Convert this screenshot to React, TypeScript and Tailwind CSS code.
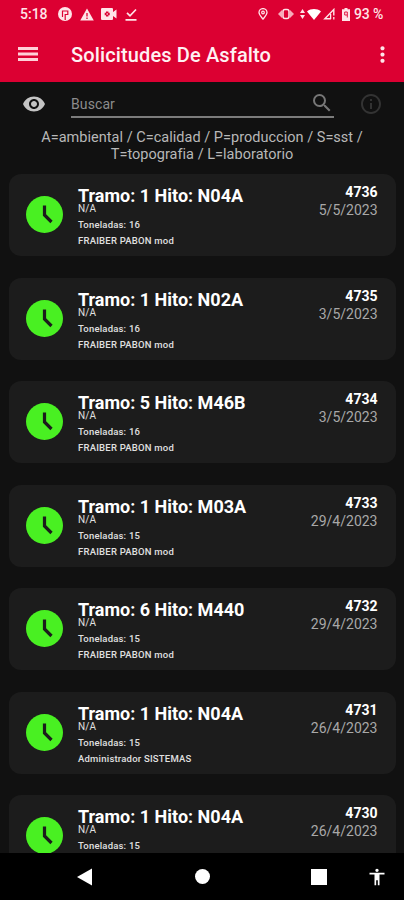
import React from 'react';
import {
  MdAccessibility,
  MdInfoOutline,
  MdMoreVert,
  MdSearch,
  MdVisibility,
} from 'react-icons/md';

const solicitudes = [
  { id: '4736', titulo: 'Tramo: 1 Hito: N04A', toneladas: 16, usuario: 'FRAIBER PABON mod', fecha: '5/5/2023' },
  { id: '4735', titulo: 'Tramo: 1 Hito: N02A', toneladas: 16, usuario: 'FRAIBER PABON mod', fecha: '3/5/2023' },
  { id: '4734', titulo: 'Tramo: 5 Hito: M46B', toneladas: 16, usuario: 'FRAIBER PABON mod', fecha: '3/5/2023' },
  { id: '4733', titulo: 'Tramo: 1 Hito: M03A', toneladas: 15, usuario: 'FRAIBER PABON mod', fecha: '29/4/2023' },
  { id: '4732', titulo: 'Tramo: 6 Hito: M440', toneladas: 15, usuario: 'FRAIBER PABON mod', fecha: '29/4/2023' },
  { id: '4731', titulo: 'Tramo: 1 Hito: N04A', toneladas: 15, usuario: 'Administrador SISTEMAS', fecha: '26/4/2023' },
  { id: '4730', titulo: 'Tramo: 1 Hito: N04A', toneladas: 15, usuario: 'Administrador SISTEMAS', fecha: '26/4/2023' },
];

const StatusBar = () => (
  <div className="flex h-7 items-center pl-5 pr-[20px] text-[#ffe4e8]">
    <span className="w-[38px] whitespace-nowrap text-[14px] font-medium leading-7">5:18</span>
    {/* Notifications */}
    <svg className="h-[14px] w-[14px]" viewBox="0 0 14 14">
      <circle cx="7" cy="7" r="7" fill="currentColor" />
      <path d="M4.500 10V4h5.300v3.500H7.200V13" fill="none" stroke="#dc0032" strokeWidth="1.200" />
    </svg>
    <svg className="ml-2 h-[13px] w-[14px]" viewBox="0 0 14 13">
      <path d="M7 .5 13.800 12.500H.2z" fill="currentColor" />
      <path d="M7 5v3.600M7 9.600V11" stroke="#dc0032" strokeWidth="1.300" />
    </svg>
    <svg className="ml-[7px] h-[12px] w-[16px]" viewBox="0 0 16 12">
      <path d="M1.500 0h9.200c.8 0 1.300.5 1.300 1.300V4l3.500-2.500v9L12 8v2.700c0 .8-.5 1.300-1.300 1.300H1.500C.6 12 0 11.500 0 10.700V1.300C0 .5.600 0 1.500 0z" fill="currentColor" />
      <path d="M6.200 3.500v5M3.700 6h5" stroke="#dc0032" strokeWidth="2.400" />
      <circle cx="6.200" cy="6" r=".8" fill="currentColor" />
    </svg>
    <svg className="ml-2 h-[13px] w-[12px]" viewBox="0 0 12 13" fill="none" stroke="currentColor" strokeWidth="1.700">
      <path d="m2 4.800 3 3L11 1.500M.5 11.800h11" />
    </svg>
    {/* System */}
    <svg className="ml-auto h-[12px] w-[10px]" viewBox="0 0 10 12" fill="none" stroke="currentColor" strokeWidth="1.300">
      <path d="M5 11.200C3 8.600 1 6.600 1 4.600a4 4 0 0 1 8 0c0 2-2 4-4 6.600z" />
      <circle cx="5" cy="4.500" r="1.300" />
    </svg>
    <svg className="ml-[10px] h-[12px] w-[16px]" viewBox="0 0 16 12">
      <path d="M0 6l4-4v8zM16 6l-4-4v8z" fill="currentColor" opacity=".75" />
      <rect x="5" y="1.500" width="6" height="9" rx="2" fill="none" stroke="currentColor" strokeWidth="1.500" />
    </svg>
    <svg className="ml-[6px] h-[10px] w-[5px]" viewBox="0 0 5 10" fill="currentColor">
      <path d="M2.500 0 5 4H0zM2.500 10 0 6h5z" />
    </svg>
    <svg className="ml-[2px] h-[11px] w-[14px]" viewBox="0 0 14 11">
      <path d="M0 2.500C4-.7 10-.7 14 2.500L7 11z" fill="#fff" />
    </svg>
    <svg className="ml-[2px] h-[12px] w-[12px]" viewBox="0 0 12 12" fill="none" stroke="currentColor">
      <path d="M8 10.800H1.800L10.800 1.500V7.500" strokeWidth="1.400" />
      <path d="M7.600 6v5M10.800 9v2.500" strokeWidth="1.300" />
    </svg>
    <svg className="ml-[7px] h-[13px] w-[8px]" viewBox="0 0 8 13">
      <path d="M2.500 0h3v1.200H8V13H0V1.200h2.500z" fill="currentColor" />
      <path d="M2.700 4h2.600v5.500M2.700 4v3h2.600" fill="none" stroke="#dc0032" strokeWidth=".9" />
    </svg>
    <span className="ml-[4px] w-[30px] whitespace-nowrap text-[14px] font-medium leading-7 tracking-[-0.1px]">93 %</span>
  </div>
);

const ClockIcon = () => (
  <svg className="mt-[22px] h-[37px] w-[37px] shrink-0" viewBox="0 0 37 37">
    <circle cx="18.500" cy="18.500" r="18.500" fill="#49f022" />
    <path d="M18.500 9.500v9.500l7 7" fill="none" stroke="#1c1c1c" strokeWidth="3.200" />
  </svg>
);

const App = () => {
  return (
    <div className="flex h-[900px] w-full flex-col overflow-hidden bg-[#111111] font-['Roboto',sans-serif]">
      {/* Header */}
      <header className="h-[82px] shrink-0 bg-[#dc0032]">
        <StatusBar />
        <div className="flex h-[54px] items-center pl-[18px] pr-[9px] text-[#ffe4e8]">
          <svg className="-mt-[2px] h-[14px] w-5" viewBox="0 0 20 14" fill="#ffd0d8">
            <path d="M0 0h20v3H0zM0 5.500h20v3H0zM0 11h20v3H0z" />
          </svg>
          <h1 className="ml-[33px] text-[20px] font-medium tracking-[0.13px] text-[#fff0f2]">Solicitudes De Asfalto</h1>
          <MdMoreVert className="-mt-[2px] ml-auto h-[25px] w-[25px]" />
        </div>
      </header>

      {/* Search */}
      <div className="flex h-[44px] shrink-0 items-center pl-[22px] pr-[21px]">
        <MdVisibility className="h-6 w-6 text-[#c4c4c4]" />
        <div className="ml-[25px] flex h-[28px] w-[263px] items-center border-b-2 border-[#7c7c7c]">
          <span className="pt-[2px] text-[14px] tracking-[0.1px] text-[#8c8c8c]">Buscar</span>
          <MdSearch className="ml-auto h-6 w-6 text-[#777777]" />
        </div>
        <MdInfoOutline className="ml-auto h-6 w-6 text-[#333333]" />
      </div>

      {/* Legend */}
      <p className="h-[48px] shrink-0 pt-[3px] text-center text-[14.500px] leading-[17px] tracking-[0.02px] text-[#b8b8b8]">
        A=ambiental / C=calidad / P=produccion / S=sst /
        <br />
        T=topografia / L=laboratorio
      </p>

      {/* List */}
      <main className="flex min-h-0 flex-1 flex-col gap-[21.500px] overflow-hidden pl-[9px] pr-2">
        {solicitudes.map((item) => (
          <div key={item.id} className="flex h-[82px] shrink-0 rounded-xl bg-[#1c1c1c] pl-[17px] pr-[18.500px]">
            <ClockIcon />
            <div className="ml-[15px] pt-[13px] text-[#e0e0e0]">
              <h2 className="text-[18px] font-bold leading-[17px] text-white">{item.titulo}</h2>
              <p className="text-[10px] leading-[10px] tracking-[0.1px]">N/A</p>
              <p className="mt-[3px] text-[9.500px] font-medium leading-4 tracking-[0.2px]">Toneladas: {item.toneladas}</p>
              <p className="text-[9.500px] font-medium leading-4 tracking-[0.22px]">{item.usuario}</p>
            </div>
            <div className="ml-auto pt-[10px] text-right">
              <p className="text-[14px] font-bold leading-[17px] text-white">{item.id}</p>
              <p className="text-[14px] leading-[19px] text-[#a8a8a8]">{item.fecha}</p>
            </div>
          </div>
        ))}
      </main>

      {/* Navigation bar */}
      <nav className="flex h-[47px] shrink-0 items-center bg-black pl-[77px] pr-[17px] text-white">
        <svg className="h-[18px] w-[15px]" viewBox="0 0 15 18" fill="currentColor">
          <path d="M0 9 15 .5v17z" />
        </svg>
        <div className="ml-[103px] h-[15px] w-[15px] rounded-full bg-white" />
        <div className="ml-[101px] h-4 w-4 bg-white" />
        <MdAccessibility className="ml-auto h-5 w-5" />
      </nav>
    </div>
  );
};

export default App;
